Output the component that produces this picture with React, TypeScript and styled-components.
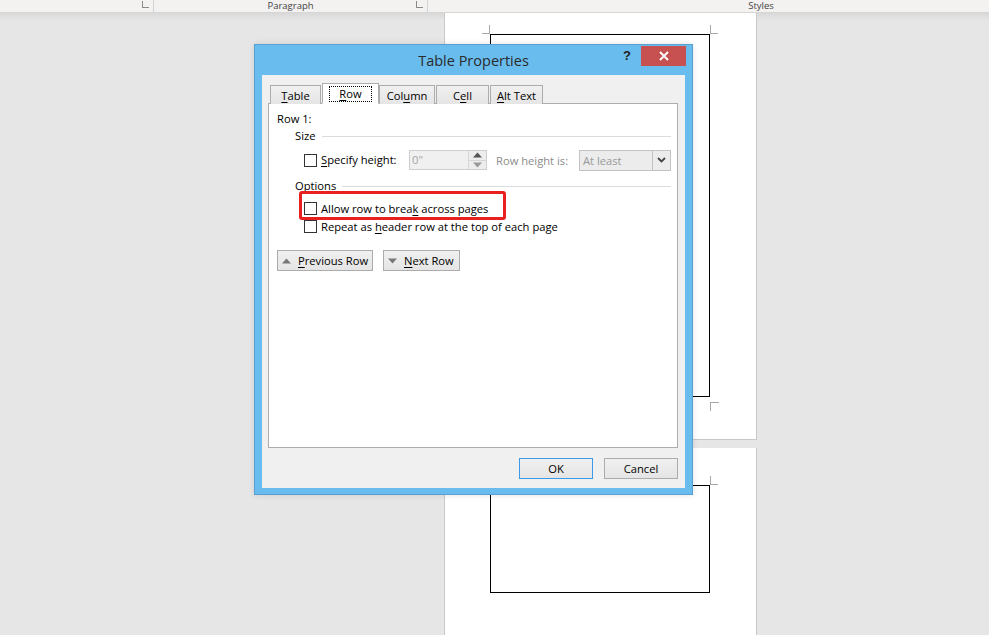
import React from 'react';
import styled, { createGlobalStyle } from 'styled-components';

const GlobalStyle = createGlobalStyle`
  html, body {
    margin: 0;
    padding: 0;
    width: 989px;
    height: 635px;
    overflow: hidden;
    background: #e6e6e6;
    font-family: "Open Sans", "Noto Sans", sans-serif;
  }
`;

const Window = styled.div`
  position: relative;
  width: 989px;
  height: 635px;
  display: flex;
  flex-direction: column;
  overflow: hidden;
`;

const RibbonStrip = styled.div`
  height: 12px;
  flex: none;
  display: flex;
  background: #f3f2f1;
  border-bottom: 1px solid #d6d6d6;
`;

const RibbonGroup = styled.div<{ w: number }>`
  position: relative;
  width: ${p => p.w}px;
  flex: none;
  display: flex;
  justify-content: center;
  border-right: 1px solid #d4d4d4;
`;

const GroupLabel = styled.span`
  font-size: 9.5px;
  line-height: 12px;
  color: #444;
`;

const Launcher = styled.span`
  position: absolute;
  right: 4px;
  top: 1px;
  width: 7px;
  height: 7px;
  border-left: 1px solid #8a8a8a;
  border-bottom: 1px solid #8a8a8a;
  box-sizing: border-box;
`;

const Workspace = styled.div`
  flex: 1;
  display: flex;
  flex-direction: column;
  gap: 8px;
  padding-left: 444px;
  background: linear-gradient(#d9d9d9, #e6e6e6 8px);
`;

const Page = styled.div<{ h: number; pt: number }>`
  width: 313px;
  height: ${p => p.h}px;
  flex: none;
  box-sizing: border-box;
  background: #fff;
  border: 1px solid #c8c8c8;
  border-top: none;
  padding: ${p => p.pt}px 0 0 45px;
`;

const TableBox = styled.div<{ h: number }>`
  position: relative;
  width: 220px;
  height: ${p => p.h}px;
  box-sizing: border-box;
  border: 1px solid #000;
`;

const Mark = styled.span<{ corner: 'tl' | 'tr' | 'br' }>`
  position: absolute;
  width: 8px;
  height: 9px;
  box-sizing: border-box;
  border-color: #a8a8a8;
  border-style: solid;
  border-width: 0;
  ${p => p.corner === 'tl' && `left: -9px; top: -10px; border-right-width: 1px; border-bottom-width: 1px;`}
  ${p => p.corner === 'tr' && `right: -9px; top: -10px; border-left-width: 1px; border-bottom-width: 1px;`}
  ${p => p.corner === 'br' && `right: -10px; bottom: -15px; border-left-width: 1px; border-top-width: 1px; width: 9px;`}
`;

/* dialog */

const Dialog = styled.div`
  position: absolute;
  left: 254px;
  top: 44px;
  width: 439px;
  height: 451px;
  box-sizing: border-box;
  background: #69bdee;
  border: 1px solid #5a9fd2;
  display: flex;
  flex-direction: column;
  box-shadow: 0 0 6px rgba(0, 0, 0, 0.12);
`;

const TitleBar = styled.div`
  position: relative;
  height: 30px;
  flex: none;
  display: flex;
  align-items: center;
  justify-content: center;
`;

const Title = styled.div`
  font-size: 14.5px;
  color: #2b2b2b;
  margin-top: 1px;
`;

const HelpButton = styled.div`
  position: absolute;
  left: 368px;
  top: 3px;
  font-size: 13px;
  font-weight: 700;
  color: #222;
  font-family: "Liberation Sans", sans-serif;
`;

const CloseButton = styled.div`
  position: absolute;
  left: 386px;
  top: 1px;
  width: 45px;
  height: 20px;
  background: #c75050;
  display: flex;
  align-items: center;
  justify-content: center;
`;

const Client = styled.div`
  flex: 1;
  margin: 0 7px 6px 7px;
  background: #f0f0f0;
  display: flex;
  flex-direction: column;
  padding: 8px 7px 0 6px;
  font-size: 11.2px;
`;

const TabRow = styled.div`
  display: flex;
  align-items: flex-end;
  height: 21px;
  padding-left: 2px;
  position: relative;
  z-index: 1;
  margin-bottom: -1px;
`;

const Tab = styled.div<{ active?: boolean; w: number }>`
  width: ${p => p.w}px;
  height: ${p => (p.active ? 21 : 19)}px;
  box-sizing: border-box;
  margin-right: ${p => (p.active ? 0 : 1)}px;
  border: 1px solid #acacac;
  border-bottom: ${p => (p.active ? '1px solid #fff' : 'none')};
  background: ${p => (p.active ? '#fff' : 'linear-gradient(#f0f0f0, #e5e5e5)')};
  display: flex;
  align-items: center;
  justify-content: center;
  color: #000;
  padding-top: ${p => (p.active ? 0 : 1)}px;
`;

const FocusRing = styled.span`
  outline: 1px dotted #000;
  padding: 0 9px;
  line-height: 14px;
`;

const Panel = styled.div`
  height: 345px;
  box-sizing: border-box;
  background: #fff;
  border: 1px solid #adadad;
  padding: 7px 6px 0 8px;
  display: flex;
  flex-direction: column;
`;

const Text = styled.div<{ w?: number }>`
  line-height: 16px;
  color: #000;
  white-space: nowrap;
  ${p => (p.w ? `width: ${p.w}px; flex: none;` : '')}
`;

const SectionHeader = styled.div<{ mt: number }>`
  display: flex;
  align-items: center;
  gap: 6px;
  margin: ${p => p.mt}px 0 0 18px;
  line-height: 16px;
  color: #000;

  &::after {
    content: '';
    flex: 1;
    height: 1px;
    background: #dcdcdc;
  }
`;

const ControlRow = styled.div<{ mt: number }>`
  display: flex;
  align-items: center;
  margin: ${p => p.mt}px 0 0 27px;
  height: 20px;
`;

const CheckRow = styled.label<{ mt: number }>`
  position: relative;
  display: flex;
  align-items: center;
  gap: 4px;
  margin: ${p => p.mt}px 0 0 27px;
  height: 16px;
  color: #000;
  white-space: nowrap;
`;

const Box = styled.span`
  width: 13px;
  height: 13px;
  flex: none;
  box-sizing: border-box;
  border: 1px solid #333;
  background: #fff;
`;

const Highlight = styled.span`
  position: absolute;
  left: -5px;
  top: -9px;
  width: 207px;
  height: 29px;
  box-sizing: border-box;
  border: 3px solid #e8201f;
  border-radius: 3px;
`;

const Spin = styled.div`
  width: 78px;
  height: 20px;
  flex: none;
  box-sizing: border-box;
  border: 1px solid #cfcfcf;
  background: #f0f0f0;
  display: flex;
`;

const SpinValue = styled.div`
  flex: 1;
  line-height: 18px;
  padding-left: 2px;
  color: #a6a6a6;
`;

const SpinButtons = styled.div`
  width: 17px;
  display: flex;
  flex-direction: column;
  border-left: 1px solid #d6d6d6;
`;

const SpinButton = styled.div`
  flex: 1;
  display: flex;
  align-items: center;
  justify-content: center;
  background: #ededed;

  & + & {
    border-top: 1px solid #d6d6d6;
  }
`;

const DisabledLabel = styled.span`
  width: 83px;
  flex: none;
  color: #8c8c8c;
  margin-left: 9px;
  white-space: nowrap;
`;

const Select = styled.div`
  width: 92px;
  height: 21px;
  flex: none;
  box-sizing: border-box;
  border: 1px solid #c3c3c3;
  background: #ececec;
  display: flex;
`;

const SelectValue = styled.div`
  flex: 1;
  line-height: 19px;
  padding-left: 3px;
  color: #999;
`;

const SelectArrow = styled.div`
  width: 17px;
  border-left: 1px solid #c3c3c3;
  display: flex;
  align-items: center;
  justify-content: center;
`;

const NavRow = styled.div`
  display: flex;
  gap: 10px;
  margin-top: 16px;
`;

const NavButton = styled.div<{ w: number }>`
  width: ${p => p.w}px;
  height: 21px;
  box-sizing: border-box;
  border: 1px solid #acacac;
  background: linear-gradient(#f0f0f0, #e5e5e5);
  display: flex;
  align-items: center;
  gap: 7px;
  padding-left: 4px;
  color: #000;
  white-space: nowrap;
`;

const Footer = styled.div`
  display: flex;
  justify-content: flex-end;
  gap: 11px;
  margin-top: 10px;
`;

const DialogButton = styled.div<{ primary?: boolean }>`
  width: 74px;
  height: 21px;
  box-sizing: border-box;
  border: 1px solid ${p => (p.primary ? '#3c9be8' : '#acacac')};
  background: linear-gradient(#f0f0f0, #e5e5e5);
  display: flex;
  align-items: center;
  justify-content: center;
  color: #000;
`;

const Arrow = ({ up, color = '#777' }: { up?: boolean; color?: string }) => (
  <svg width="9" height="6" viewBox="0 0 9 6">
    <path d={up ? 'M0 5.5 L4.5 0.5 L9 5.5 Z' : 'M0 0.5 L4.5 5.5 L9 0.5 Z'} fill={color} />
  </svg>
);

const U = styled.span`
  text-decoration: underline;
  text-underline-offset: 2px;
`;

export default function App() {
  return (
    <>
      <GlobalStyle />
      <Window>
        <RibbonStrip>
          <RibbonGroup w={153}>
            <Launcher />
          </RibbonGroup>
          <RibbonGroup w={273}>
            <GroupLabel>Paragraph</GroupLabel>
            <Launcher />
          </RibbonGroup>
          <RibbonGroup w={666}>
            <GroupLabel>Styles</GroupLabel>
          </RibbonGroup>
        </RibbonStrip>

        <Workspace>
          <Page h={427} pt={21}>
            <TableBox h={363}>
              <Mark corner="tl" />
              <Mark corner="tr" />
              <Mark corner="br" />
            </TableBox>
          </Page>
          <Page h={200} pt={37}>
            <TableBox h={108}>
              <Mark corner="tl" />
              <Mark corner="tr" />
            </TableBox>
          </Page>
        </Workspace>

        <Dialog>
          <TitleBar>
            <Title>Table Properties</Title>
            <HelpButton>?</HelpButton>
            <CloseButton>
              <svg width="10" height="10" viewBox="0 0 10 10">
                <path d="M1 1 L9 9 M9 1 L1 9" stroke="#fff" strokeWidth="2" />
              </svg>
            </CloseButton>
          </TitleBar>
          <Client>
            <TabRow>
              <Tab w={51}><span><U>T</U>able</span></Tab>
              <Tab w={57} active><FocusRing><U>R</U>ow</FocusRing></Tab>
              <Tab w={56}><span>Col<U>u</U>mn</span></Tab>
              <Tab w={53}><span>C<U>e</U>ll</span></Tab>
              <Tab w={53}><span><U>A</U>lt Text</span></Tab>
            </TabRow>
            <Panel>
              <Text>Row 1:</Text>
              <SectionHeader mt={1}>Size</SectionHeader>
              <ControlRow mt={6}>
                <Box />
                <Text w={88} style={{ marginLeft: 4 }}><U>S</U>pecify height:</Text>
                <Spin>
                  <SpinValue>0"</SpinValue>
                  <SpinButtons>
                    <SpinButton><Arrow up color="#555" /></SpinButton>
                    <SpinButton><Arrow color="#999" /></SpinButton>
                  </SpinButtons>
                </Spin>
                <DisabledLabel>Row height is:</DisabledLabel>
                <Select>
                  <SelectValue>At least</SelectValue>
                  <SelectArrow>
                    <svg width="9" height="6" viewBox="0 0 9 6">
                      <path d="M1 1 L4.5 4.5 L8 1" stroke="#444" strokeWidth="1.8" fill="none" />
                    </svg>
                  </SelectArrow>
                </Select>
              </ControlRow>
              <SectionHeader mt={8}>Options</SectionHeader>
              <CheckRow mt={6}>
                <Highlight />
                <Box />
                <span>Allow row to brea<U>k</U> across pages</span>
              </CheckRow>
              <CheckRow mt={2}>
                <Box />
                <span>Repeat as <U>h</U>eader row at the top of each page</span>
              </CheckRow>
              <NavRow>
                <NavButton w={96}>
                  <Arrow up />
                  <span><U>P</U>revious Row</span>
                </NavButton>
                <NavButton w={77}>
                  <Arrow />
                  <span><U>N</U>ext Row</span>
                </NavButton>
              </NavRow>
            </Panel>
            <Footer>
              <DialogButton primary>OK</DialogButton>
              <DialogButton>Cancel</DialogButton>
            </Footer>
          </Client>
        </Dialog>
      </Window>
    </>
  );
}
